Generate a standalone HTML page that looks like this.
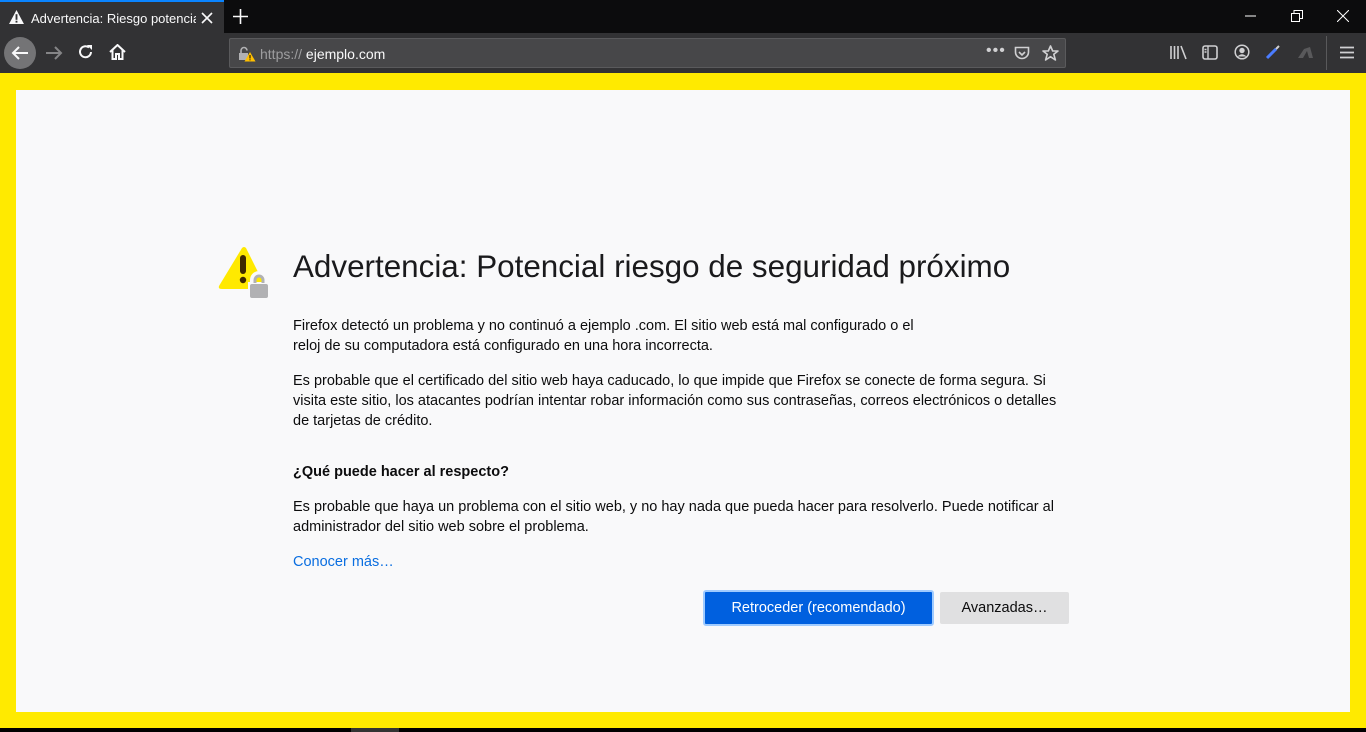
<!DOCTYPE html>
<html><head><meta charset="utf-8"><style>
*{margin:0;padding:0;box-sizing:border-box}
body{width:1366px;height:732px;overflow:hidden;background:#000;font-family:"Liberation Sans",sans-serif;position:relative}
.tabbar{position:absolute;top:0;left:0;width:1366px;height:33px;background:#0c0c0d}
.tab{position:absolute;left:0;top:0;width:224px;height:33px;background:#323234;border-top:2px solid #0a84ff;color:#f9f9fa;font-size:13px}
.nav{position:absolute;top:33px;left:0;width:1366px;height:40px;background:#323234}
.url{position:absolute;left:229px;top:5px;width:837px;height:30px;background:#474749;border:1px solid #5a5a5c;border-radius:2px;color:#f9f9fa;font-size:14px}
.yellow{position:absolute;top:73px;left:0;width:1366px;height:655px;background:#ffea00}
.page{position:absolute;top:90px;left:16px;width:1334px;height:622px;background:#f9f9fa;color:#0c0c0d}
.abs{position:absolute}
p{font-size:14.5px;line-height:20px}
</style></head><body>
<div class="tabbar">
 <div class="tab">
  <svg class="abs" style="left:9px;top:8px" width="15" height="14" viewBox="0 0 16 15"><path d="M8 0L16 15H0Z" fill="#f9f9fa"/><rect x="7" y="4.5" width="2" height="6" fill="#323234"/><rect x="7" y="11.5" width="2" height="2" fill="#323234"/></svg>
  <span class="abs" style="left:31px;top:9px;white-space:nowrap;width:165px;overflow:hidden">Advertencia: Riesgo potencial d</span>
  <svg class="abs" style="left:201px;top:10px" width="12" height="12"><path d="M1 1L11 11M11 1L1 11" stroke="#f9f9fa" stroke-width="1.6"/></svg>
 </div>
 <svg class="abs" style="left:233px;top:9px" width="15" height="15"><path d="M7.5 0V15M0 7.5H15" stroke="#f9f9fa" stroke-width="1.6"/></svg>
 <svg class="abs" style="left:1245px;top:15px" width="12" height="2"><path d="M0 1H11" stroke="#fff"/></svg>
 <svg class="abs" style="left:1291px;top:10px" width="12" height="12"><rect x="0.5" y="3.5" width="8" height="8" fill="none" stroke="#fff"/><path d="M3 3.5V0.5H11.5V8.5H8.5" fill="none" stroke="#fff"/></svg>
 <svg class="abs" style="left:1337px;top:10px" width="12" height="12"><path d="M0 0L12 12M12 0L0 12" stroke="#fff"/></svg>
</div>
<div class="nav">
 <div class="abs" style="left:4px;top:4px;width:32px;height:32px;border-radius:50%;background:#747476"></div>
 <svg class="abs" style="left:11px;top:12px" width="18" height="16"><path d="M17 8H2M8 2L2 8L8 14" fill="none" stroke="#f9f9fa" stroke-width="2"/></svg>
 <svg class="abs" style="left:45px;top:12px" width="18" height="16"><path d="M1 8H16M10 2L16 8L10 14" fill="none" stroke="#858587" stroke-width="2"/></svg>
 <svg class="abs" style="left:78px;top:11px" width="16" height="16"><path d="M13 8A5.5 5.5 0 1 1 11 3.5" fill="none" stroke="#f9f9fa" stroke-width="2"/><path d="M9 1H14V6Z" fill="#f9f9fa"/></svg>
 <svg class="abs" style="left:109px;top:11px" width="17" height="16"><path d="M1 8L8.5 1L16 8M3.5 6V15H7V10H10V15H13.5V6" fill="none" stroke="#f9f9fa" stroke-width="2"/></svg>
 <div class="url">
  <svg class="abs" style="left:8px;top:7px" width="18" height="16"><path d="M3 7V4.5A3 3 0 0 1 9 4.5" fill="none" stroke="#b1b1b3" stroke-width="1.6"/><rect x="1" y="7" width="9" height="7" fill="#b1b1b3"/><path d="M12 6L17.5 15.5H6.5Z" fill="#ffbf00"/><rect x="11.5" y="9" width="1" height="3.5" fill="#000"/><rect x="11.5" y="13.3" width="1" height="1" fill="#000"/></svg>
  <span class="abs" style="left:30px;top:7px"><span style="color:#9d9d9f">https://</span> ejemplo.com</span>
  <span class="abs" style="left:756px;top:3px;font-size:16px;color:#d0d0d2;letter-spacing:1px">•••</span>
  <svg class="abs" style="left:784px;top:7px" width="16" height="15"><path d="M1.5 1.5H14.5V6A6.5 6.5 0 0 1 1.5 6Z" fill="none" stroke="#d0d0d2" stroke-width="1.6"/><path d="M5 6L8 9L11 6" fill="none" stroke="#d0d0d2" stroke-width="1.6"/></svg>
  <svg class="abs" style="left:812px;top:6px" width="17" height="17"><path d="M8.5 1L10.7 6H16L11.8 9.3L13.4 15L8.5 11.7L3.6 15L5.2 9.3L1 6H6.3Z" fill="none" stroke="#d0d0d2" stroke-width="1.6" stroke-linejoin="round"/></svg>
 </div>
 <svg class="abs" style="left:1170px;top:12px" width="17" height="15"><path d="M1 1V14M4.5 1V14M8 1V14M11 1L16 14" stroke="#d0d0d2" stroke-width="1.6"/></svg>
 <svg class="abs" style="left:1202px;top:12px" width="16" height="15"><rect x="1" y="1" width="14" height="13" rx="2" fill="none" stroke="#d0d0d2" stroke-width="1.6"/><path d="M6 1V14M2.5 4.5H4.5M2.5 7H4.5" stroke="#d0d0d2" stroke-width="1.4"/></svg>
 <svg class="abs" style="left:1234px;top:11px" width="16" height="16"><circle cx="8" cy="8" r="6.8" fill="none" stroke="#d0d0d2" stroke-width="1.5"/><circle cx="8" cy="6.5" r="2.7" fill="#d0d0d2"/><path d="M3.5 12.5Q8 8 12.5 12.5" fill="#d0d0d2"/></svg>
 <svg class="abs" style="left:1265px;top:11px" width="16" height="16"><path d="M2 14L11 5" stroke="#4a7cff" stroke-width="3"/><path d="M11 5L14 2" stroke="#d0d0d2" stroke-width="2"/></svg>
 <svg class="abs" style="left:1297px;top:12px" width="17" height="14"><path d="M1 13L7 4L13 2L16 13H12L10 6L6 13Z" fill="#59595b"/></svg>
 <div class="abs" style="left:1326px;top:3px;width:1px;height:34px;background:#59595b"></div>
 <svg class="abs" style="left:1340px;top:13px" width="14" height="13"><path d="M0 1.5H14M0 6.5H14M0 11.5H14" stroke="#d0d0d2" stroke-width="1.8"/></svg>
</div>
<div class="yellow"></div>
<div class="abs" style="left:351px;top:728px;width:48px;height:4px;background:#333"></div>
<div class="page">
 <svg class="abs" style="left:202px;top:156px" width="56" height="54"><path d="M24 2Q26 0 28 2L47 40Q48 43 44 43H4Q0 43 1 40Z" fill="#ffe900"/><rect x="22" y="9" width="6" height="19" rx="3" fill="#3e2800"/><circle cx="25" cy="34" r="3.2" fill="#3e2800"/><path d="M35 37V34A6 6 0 0 1 47 34V37" fill="none" stroke="#f9f9fa" stroke-width="6"/><rect x="30" y="36" width="22" height="17" fill="#f9f9fa"/><path d="M37 37V34A4 4 0 0 1 45 34V37" fill="none" stroke="#b1b1b3" stroke-width="3"/><rect x="32" y="38" width="18" height="14" rx="2" fill="#b1b1b3"/></svg>
 <div class="abs" style="left:277px;top:159px;font-size:31.4px;color:#1a1a1c;white-space:nowrap">Advertencia: Potencial riesgo de seguridad próximo</div>
 <div class="abs" style="left:277px;top:226px;width:782px">
  <p>Firefox detectó un problema y no continuó a ejemplo .com. El sitio web está mal configurado o el<br>reloj de su computadora está configurado en una hora incorrecta.</p>
  <p style="margin-top:15px">Es probable que el certificado del sitio web haya caducado, lo que impide que Firefox se conecte de forma segura. Si visita este sitio, los atacantes podrían intentar robar información como sus contraseñas, correos electrónicos o detalles de tarjetas de crédito.</p>
  <p style="margin-top:31px;font-weight:bold">¿Qué puede hacer al respecto?</p>
  <p style="margin-top:15px">Es probable que haya un problema con el sitio web, y no hay nada que pueda hacer para resolverlo. Puede notificar al administrador del sitio web sobre el problema.</p>
  <p style="margin-top:15px;color:#0a6ee0">Conocer más…</p>
 </div>
 <div class="abs" style="left:687px;top:500px;width:231px;height:36px;background:#0060df;border:2px solid #9fcbff;border-radius:3px;color:#fff;font-size:14.5px;text-align:center;line-height:32px">Retroceder (recomendado)</div>
 <div class="abs" style="left:924px;top:502px;width:129px;height:32px;background:#e0e0e1;border-radius:2px;color:#0c0c0d;font-size:14.5px;text-align:center;line-height:32px">Avanzadas…</div>
</div>
</body></html>
